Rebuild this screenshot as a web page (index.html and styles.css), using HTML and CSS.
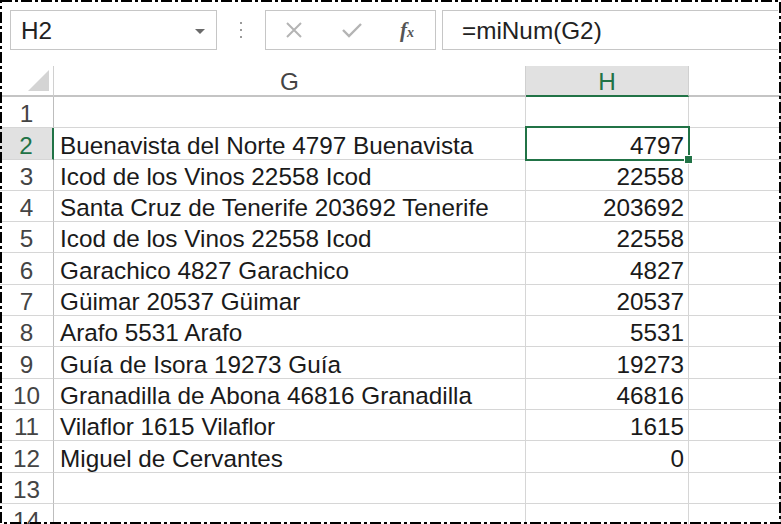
FILE: index.html
```html
<!DOCTYPE html>
<html lang="es">
<head>
    <meta charset="UTF-8">
    <meta name="viewport" content="width=device-width, initial-scale=1.0">
    <title>miNum</title>
    <link rel="stylesheet" href="styles.css">
</head>
<body>
    <div class="screen">
        <div class="formula-bar">
            <div class="name-box">
                <span>H2</span>
                <span class="caret"></span>
            </div>
            <div class="grip"><i></i><i></i><i></i></div>
            <div class="fx-buttons">
                <svg class="btn-cancel" width="18" height="18" viewBox="0 0 18 18">
                    <path d="M2 2 L16 16 M16 2 L2 16" stroke="#b4b4b4" stroke-width="2" fill="none"/>
                </svg>
                <svg class="btn-enter" width="22" height="18" viewBox="0 0 22 18">
                    <path d="M2 9 L8 15 L20 3" stroke="#b4b4b4" stroke-width="2.4" fill="none"/>
                </svg>
                <span class="btn-fx">f<small>x</small></span>
            </div>
            <div class="formula-input">=miNum(G2)</div>
        </div>

        <div class="sheet">
            <div class="row head">
                <div class="corner"><span class="tri"></span></div>
                <div class="col-head">G</div>
                <div class="col-head active">H</div>
                <div class="col-head"></div>
            </div>
            <div class="row"><div class="rh">1</div><div class="c"></div><div class="c num"></div><div class="c"></div></div>
            <div class="row"><div class="rh active">2</div><div class="c">Buenavista del Norte 4797 Buenavista</div><div class="c num selected">4797</div><div class="c"></div></div>
            <div class="row"><div class="rh">3</div><div class="c">Icod de los Vinos 22558 Icod</div><div class="c num">22558</div><div class="c"></div></div>
            <div class="row"><div class="rh">4</div><div class="c">Santa Cruz de Tenerife 203692 Tenerife</div><div class="c num">203692</div><div class="c"></div></div>
            <div class="row"><div class="rh">5</div><div class="c">Icod de los Vinos 22558 Icod</div><div class="c num">22558</div><div class="c"></div></div>
            <div class="row"><div class="rh">6</div><div class="c">Garachico 4827 Garachico</div><div class="c num">4827</div><div class="c"></div></div>
            <div class="row"><div class="rh">7</div><div class="c">Güimar 20537 Güimar</div><div class="c num">20537</div><div class="c"></div></div>
            <div class="row"><div class="rh">8</div><div class="c">Arafo 5531 Arafo</div><div class="c num">5531</div><div class="c"></div></div>
            <div class="row"><div class="rh">9</div><div class="c">Guía de Isora 19273 Guía</div><div class="c num">19273</div><div class="c"></div></div>
            <div class="row"><div class="rh">10</div><div class="c">Granadilla de Abona 46816 Granadilla</div><div class="c num">46816</div><div class="c"></div></div>
            <div class="row"><div class="rh">11</div><div class="c">Vilaflor 1615 Vilaflor</div><div class="c num">1615</div><div class="c"></div></div>
            <div class="row"><div class="rh">12</div><div class="c">Miguel de Cervantes</div><div class="c num">0</div><div class="c"></div></div>
            <div class="row"><div class="rh">13</div><div class="c"></div><div class="c num"></div><div class="c"></div></div>
            <div class="row"><div class="rh">14</div><div class="c"></div><div class="c num"></div><div class="c"></div></div>
        </div>

        <!-- snipping selection frame -->
        <svg class="frame" width="781" height="524" viewBox="0 0 781 524">
            <rect x="1" y="1" width="779" height="522" fill="none" stroke="#000" stroke-width="2" stroke-dasharray="11 3 3 3"/>
        </svg>
    </div>
</body>
</html>
```

FILE: styles.css
```css
* { box-sizing: border-box; }
html, body { margin: 0; padding: 0; background: #fff; }
body { font-family: 'Liberation Sans', Arial, sans-serif; color: #1a1a1a; }
.screen { position: relative; width: 781px; height: 524px; overflow: hidden; background: #fff; }

/* formula bar */
.formula-bar { display: flex; height: 50px; padding: 10px 3px 0 10px; margin-bottom: 16px; }
.name-box { width: 207px; height: 40px; border: 1px solid #c6c6c6; display: flex; align-items: center; justify-content: space-between; padding: 0 11px 0 10px; font-size: 24.3px; line-height: 27px; color: #222; }
.caret { width: 0; height: 0; border-left: 5px solid transparent; border-right: 5px solid transparent; border-top: 5px solid #6a6a6a; margin-top: 2px; }
.grip { width: 48px; display: flex; flex-direction: column; align-items: center; justify-content: center; gap: 5px; }
.grip i { display: block; width: 2px; height: 2px; background: #9a9a9a; }
.fx-buttons { width: 171px; height: 40px; border: 1px solid #c6c6c6; display: flex; align-items: center; padding-left: 19px; }
.btn-cancel { margin-right: 38px; }
.btn-enter { margin-right: 37px; }
.btn-fx { font-family: 'Liberation Serif', 'Times New Roman', serif; font-style: italic; font-weight: bold; font-size: 21px; color: #555; line-height: 1; }
.btn-fx small { font-size: 14px; }
.formula-input { flex: 1; height: 40px; margin-left: 6px; border: 1px solid #c6c6c6; border-right: none; padding-left: 19px; display: flex; align-items: center; font-size: 24.3px; line-height: 27px; color: #222; }

/* grid */
.row { display: grid; grid-template-columns: 54px 472px 163px 1fr; height: 31.3px; }
.row > div { border-right: 1px solid #d6d6d6; border-bottom: 1px solid #d6d6d6; font-size: 24.3px; line-height: 27px; display: flex; align-items: flex-end; white-space: nowrap; }
.row.head { height: 31px; }
.row.head > div { border-bottom: 2px solid #c4c4c4; border-right-color: #d0d0d0; justify-content: center; align-items: center; color: #444; padding-top: 1px; }
.row.head .col-head.active { background: #e1e1e1; border-bottom-color: #217346; color: #217346; }
.corner { position: relative; }
.tri { position: absolute; left: 28px; bottom: 4px; width: 0; height: 0; border-left: 21px solid transparent; border-bottom: 21px solid #d4d4d4; }
.rh { justify-content: center; color: #444; }
.row > .rh { border-right: 1px solid #bdbdbd; }
.row > .rh.active { background: #e1e1e1; color: #217346; border-right: 2px solid #217346; }
.c { padding-left: 6px; }
.c.num { justify-content: flex-end; padding: 0 4px 0 0; }
.c.selected { position: relative; }
.c.selected::after { content: ""; position: absolute; left: -1px; top: -2px; right: -2px; bottom: -2px; border: 2px solid #217346; }
.c.selected::before { content: ""; position: absolute; right: -5px; bottom: -5px; width: 7px; height: 7px; background: #217346; border: 1px solid #fff; z-index: 1; }

.frame { position: absolute; left: 0; top: 0; pointer-events: none; }
```
